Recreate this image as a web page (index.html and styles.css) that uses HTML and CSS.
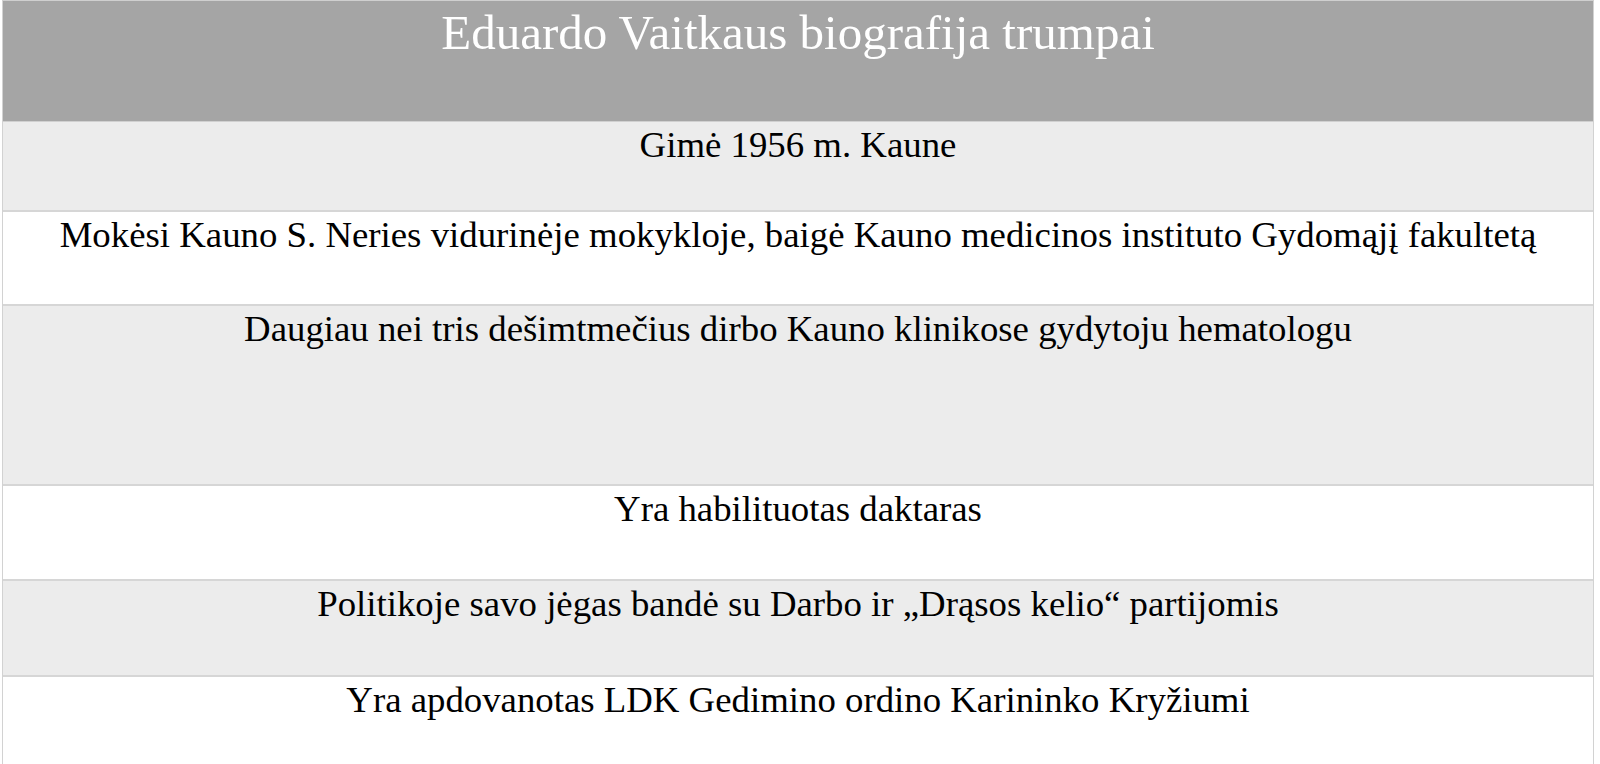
FILE: index.html
```html
<!DOCTYPE html>
<html lang="lt">
<head>
<meta charset="utf-8">
<title>Eduardo Vaitkaus biografija trumpai</title>
<link rel="stylesheet" href="styles.css">
</head>
<body>
<div class="bio">
  <div class="row head">Eduardo Vaitkaus biografija trumpai</div>
  <div class="row alt h90">Gimė 1956 m. Kaune</div>
  <div class="row h94">Mokėsi Kauno S. Neries vidurinėje mokykloje, baigė Kauno medicinos instituto Gydomąjį fakultetą</div>
  <div class="row alt h180">Daugiau nei tris dešimtmečius dirbo Kauno klinikose gydytoju hematologu</div>
  <div class="row h95">Yra habilituotas daktaras</div>
  <div class="row alt h96">Politikoje savo jėgas bandė su Darbo ir „Drąsos kelio“ partijomis</div>
  <div class="row h95">Yra apdovanotas LDK Gedimino ordino Karininko Kryžiumi</div>
</div>
</body>
</html>
```

FILE: styles.css
```css
html, body {
  margin: 0;
  padding: 0;
  background: #ffffff;
}
body {
  font-family: "Liberation Serif", "Times New Roman", serif;
  color: #000000;
  overflow: hidden;
}
.bio {
  margin-left: 2px;
  width: 1592px;
  display: flex;
  flex-direction: column;
  border-top: 1px solid #cfcfcf;
  border-left: 1px solid #d2d2d2;
  border-right: 1px solid #d2d2d2;
  box-sizing: border-box;
}
.row {
  box-sizing: border-box;
  text-align: center;
  font-size: 36.8px;
  line-height: 41px;
  padding-top: 2px;
  border-bottom: 2px solid #d6d6d6;
  background: #ffffff;
}
.row.alt {
  background: #ececec;
}
.row.head {
  height: 121px;
  background: #a5a5a5;
  color: #ffffff;
  font-size: 49px;
  line-height: 55px;
  padding-top: 4px;
  border-bottom: 1px solid #d0d0d0;
}
.h90 { height: 90px; }
.h94 { height: 94px; }
.h95 { height: 95px; }
.h96 { height: 96px; }
.h180 { height: 180px; }
```
